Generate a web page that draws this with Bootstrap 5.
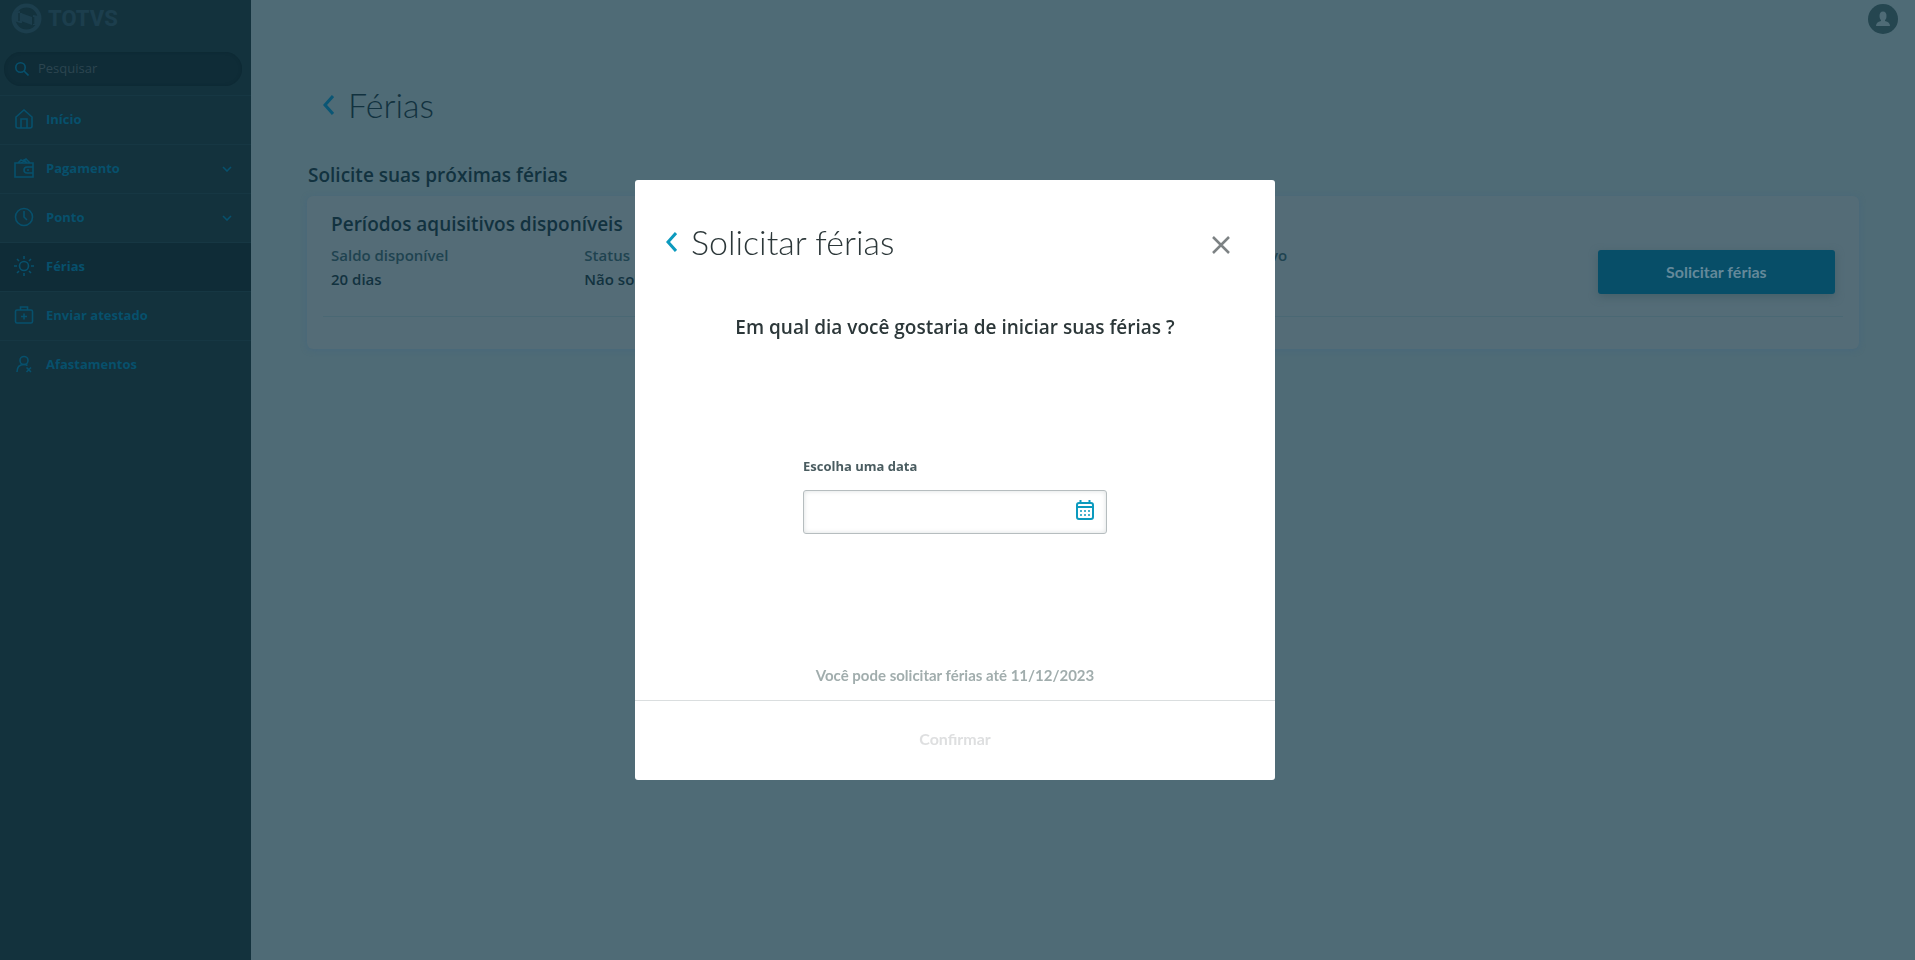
<!doctype html>
<html lang="pt-BR">
<head>
<meta charset="utf-8">
<meta name="viewport" content="width=device-width, initial-scale=1">
<title>Férias</title>
<link rel="stylesheet" href="https://cdn.jsdelivr.net/npm/bootstrap@5.3.0/dist/css/bootstrap.min.css">
<style>
  body { font-family: "Open Sans", sans-serif; background: #4f6b76; color: #12323f; }
  svg { fill: none; stroke: currentColor; stroke-width: 2; flex: none; display: block; }
  .side { width: 251px; background: #13323d; color: #07506c; }
  .side svg { stroke-width: 1.6; }
  .brand { height: 52px; padding: 3px 0 0 11px; color: #1c3e4d; gap: 6px; }
  .brand-name { font: 800 22px/32px Roboto, sans-serif; }
  .search { margin: 0 9px 9px 4px; height: 34px; padding: 0 11px; border-radius: 17px; background: #0f2c37; box-shadow: inset 0 0 3px #0d2832; gap: 9px; }
  .search input { background: none; border: 0; outline: 0; font-size: 13px; color: #2c4550; padding: 0; min-width: 0; }
  .search input::placeholder { color: #2c4550; opacity: 1; }
  .menu-item { height: 49px; padding: 0 19px 0 14px; border-top: 1px solid #163743; font-size: 13px; font-weight: 700; color: #07506c; text-decoration: none; gap: 12px; }
  .menu-item.active { background: #0f2c37; }
  .topbar { height: 83px; padding: 4px 17px; }
  .avatar { width: 30px; height: 30px; background: #254650; border: 0; padding: 0; }
  .content { padding: 0 56px; }
  .title-row { gap: 14px; }
  .page-title { font: 300 34px/44px Lato, sans-serif; margin: 0; }
  .back { border: 0; background: none; padding: 0; }
  .t19 { font-size: 19px; line-height: 26px; font-weight: 600; margin: 0; }
  .section-title { padding: 35px 0 8px 1px; }
  .t15 { font-size: 15px; line-height: 24px; font-weight: 600; }
  .panel { background: #546c77; border-radius: 6px; box-shadow: 0 1px 5px 1px #49687a; padding: 15px 16px 32px; }
  .panel > .t19 { padding-left: 8px; }
  .panel .row { --bs-gutter-x: 16px; height: 80px; border-bottom: 1px solid #4a6874; padding-top: 6px; }
  .lbl { color: #1f4350; }
  .btn-main { background: #074e68; color: #64899a; height: 44px; margin-top: 7px; border: 0; border-radius: 3px; font: 700 16px/24px Lato, sans-serif; box-shadow: 0 3px 8px #45606a; }
  .page-back { color: #0a5675; }
  .modal { padding-right: 5px; }
  .modal-dialog { --bs-modal-width: 640px; }
  .modal-content { border: 0; border-radius: 3px; height: 600px; }
  .modal-header { padding: 40px 44px 0 31px; border: 0; }
  .close-x { color: #7d8284; padding-top: 6px; }
  .ink { color: #2c3739; }
  .blue { color: #0c9abe; }
  .modal-body { padding: 50px 0 14px; }
  .date-field { width: 304px; margin-top: 116px; }
  .date-field label { font-size: 13px; line-height: 20px; font-weight: 700; color: #4a5c60; margin-bottom: 14px; }
  .date-box { height: 44px; border: 1px solid #b6bdbf; border-radius: 3px; box-shadow: inset 0 0 5px #dcdfe0; padding-right: 12px; }
  .date-box input { border: 0; background: none; outline: 0; min-width: 0; height: 40px; padding: 0 12px; }
  .note { font: 700 15px/22px Lato, sans-serif; color: #a1adad; margin: 0; }
  .modal-footer { height: 80px; padding: 0 0 4px; border-top: 1px solid #dadedf; }
  .confirm { font: 700 16px/24px Lato, sans-serif; color: #dedfe0; border: 0; background: none; }
</style>
</head>
<body>
<div class="d-flex min-vh-100">
  <nav class="side d-flex flex-column flex-shrink-0">
    <div class="brand d-flex align-items-start">
      <svg width="31" height="31" viewBox="0 0 31 31"><circle cx="15.500" cy="15.500" r="13" style="stroke-width:4"/><path d="M10 10l11 4v8l-11-4z" fill="currentColor" stroke="none"/><path d="M3 9l6-1v2h2v10H9l-6-2zM28 13l-6-1v10l6 0z" fill="currentColor" stroke="none"/><path d="M8 10v8M22.500 14v7" style="stroke:#13323d;stroke-width:1.500"/></svg>
      <span class="brand-name">TOTVS</span>
    </div>
    <label class="search d-flex align-items-center">
      <svg width="14" height="14" viewBox="0 0 14 14"><circle cx="5.500" cy="5.500" r="4.700"/><path d="M9 9l4.500 4.500"/></svg>
      <input type="search" class="flex-grow-1" placeholder="Pesquisar" aria-label="Pesquisar">
    </label>
    <a href="#" class="menu-item d-flex align-items-center">
      <svg width="20" height="22" viewBox="0 0 20 22"><path d="M2 8l8-7 8 7v9q0 2-2 2H4q-2 0-2-2zM7 19v-9h6v9"/></svg>Início</a>
    <a href="#" class="menu-item d-flex align-items-center">
      <svg width="20" height="22" viewBox="0 0 20 22"><path d="M1 5h18v14H1zM19 9h-6q-3 0-3 3t3 3h6M13 12h2M4 5l3-3 2 1 3-2 4 4M7 5l3-3 3 3"/></svg><span class="flex-grow-1">Pagamento</span>
      <svg width="10" height="6" viewBox="0 0 10 6"><path d="M1 1l4 4 4-4"/></svg></a>
    <a href="#" class="menu-item d-flex align-items-center">
      <svg width="20" height="22" viewBox="0 0 20 22"><circle cx="10" cy="10" r="8.500"/><path d="M10 4v6l3 3"/></svg><span class="flex-grow-1">Ponto</span>
      <svg width="10" height="6" viewBox="0 0 10 6"><path d="M1 1l4 4 4-4"/></svg></a>
    <a href="#" class="menu-item active d-flex align-items-center" aria-current="page">
      <svg width="20" height="22" viewBox="0 0 20 22"><circle cx="10" cy="10" r="4.500"/><path d="M10 0v3M10 17v3M0 10h3M17 10h3M3 3l2 2M15 15l2 2M17 3l-2 2M5 15l-2 2"/></svg>Férias</a>
    <a href="#" class="menu-item d-flex align-items-center">
      <svg width="20" height="22" viewBox="0 0 20 22"><rect x="1.500" y="5" width="17" height="13" rx="1.500"/><path d="M6.500 5V2h7v3M10 8.500v6M7 11.500h6"/></svg>Enviar atestado</a>
    <a href="#" class="menu-item d-flex align-items-center">
      <svg width="20" height="22" viewBox="0 0 20 22"><circle cx="10" cy="6.500" r="4"/><path d="M3 18q0-7.500 7-7.500 2 0 3.500 1M12.500 13.500l4.500 4.500M17 13.500l-4.500 4.500"/></svg>Afastamentos</a>
  </nav>
  <main class="flex-grow-1">
    <div class="topbar d-flex justify-content-end">
      <button class="avatar rounded-circle d-flex align-items-center justify-content-center" aria-label="Perfil">
        <svg width="14" height="16" viewBox="0 0 14 16" style="fill:#4f6b76;stroke:none"><ellipse cx="7" cy="5" rx="3.500" ry="4.500"/><path d="M5 8h4v2q5 1 5 5H0q0-4 5-5z"/></svg>
      </button>
    </div>
    <div class="content">
      <div class="title-row d-flex align-items-center ps-3">
        <button class="back page-back" aria-label="Voltar"><svg width="11" height="20" viewBox="0 0 11 20" style="stroke-width:3"><path d="M10 1l-8 9 8 9"/></svg></button>
        <h1 class="page-title">Férias</h1>
      </div>
      <h2 class="t19 section-title">Solicite suas próximas férias</h2>
      <section class="panel">
        <h3 class="t19">Períodos aquisitivos disponíveis</h3>
        <div class="row mx-0">
          <div class="col-2 t15"><div class="lbl">Saldo disponível</div><div>20 dias</div></div>
          <div class="col-2 t15"><div class="lbl">Status</div><div>Não solicitado</div></div>
          <div class="col-2 offset-2 t15"><div class="lbl text-nowrap">Início do período aquisitivo</div></div>
          <div class="col-2 offset-2"><button class="btn btn-main w-100">Solicitar férias</button></div>
        </div>
      </section>
    </div>
  </main>
</div>

<div class="modal d-block" tabindex="-1" role="dialog" aria-labelledby="dlgTitle">
  <div class="modal-dialog modal-dialog-centered my-0 mx-auto min-vh-100">
    <div class="modal-content">
      <div class="modal-header d-flex">
        <div class="title-row d-flex align-items-center">
          <button class="back blue" aria-label="Voltar"><svg width="11" height="20" viewBox="0 0 11 20" style="stroke-width:3"><path d="M10 1l-8 9 8 9"/></svg></button>
          <h2 class="page-title ink" id="dlgTitle">Solicitar férias</h2>
        </div>
        <button class="back close-x" aria-label="Fechar"><svg width="20" height="20" viewBox="0 0 20 20" style="stroke-width:2.500"><path d="M2 2l16 16M18 2L2 18"/></svg></button>
      </div>
      <div class="modal-body d-flex flex-column align-items-center">
        <p class="t19 ink">Em qual dia você gostaria de iniciar suas férias ?</p>
        <div class="date-field">
          <label for="data" class="d-block">Escolha uma data</label>
          <div class="date-box d-flex align-items-center">
            <input id="data" type="text" class="flex-grow-1">
            <button class="back blue pb-1" aria-label="Abrir calendário"><svg width="18" height="20" viewBox="0 0 18 20"><rect x="1" y="3" width="16" height="16" rx="2"/><path d="M1 7h16M4.500 0v3M13.500 0v3"/><path d="M4 11h2M8 11h2M12 11h2M4 15h2M8 15h2M12 15h2" style="stroke-width:1.500"/></svg></button>
          </div>
        </div>
        <p class="note mt-auto">Você pode solicitar férias até 11/12/2023</p>
      </div>
      <div class="modal-footer justify-content-center">
        <button class="confirm" disabled>Confirmar</button>
      </div>
    </div>
  </div>
</div>
<script src="https://cdn.jsdelivr.net/npm/bootstrap@5.3.0/dist/js/bootstrap.bundle.min.js"></script>
</body>
</html>
